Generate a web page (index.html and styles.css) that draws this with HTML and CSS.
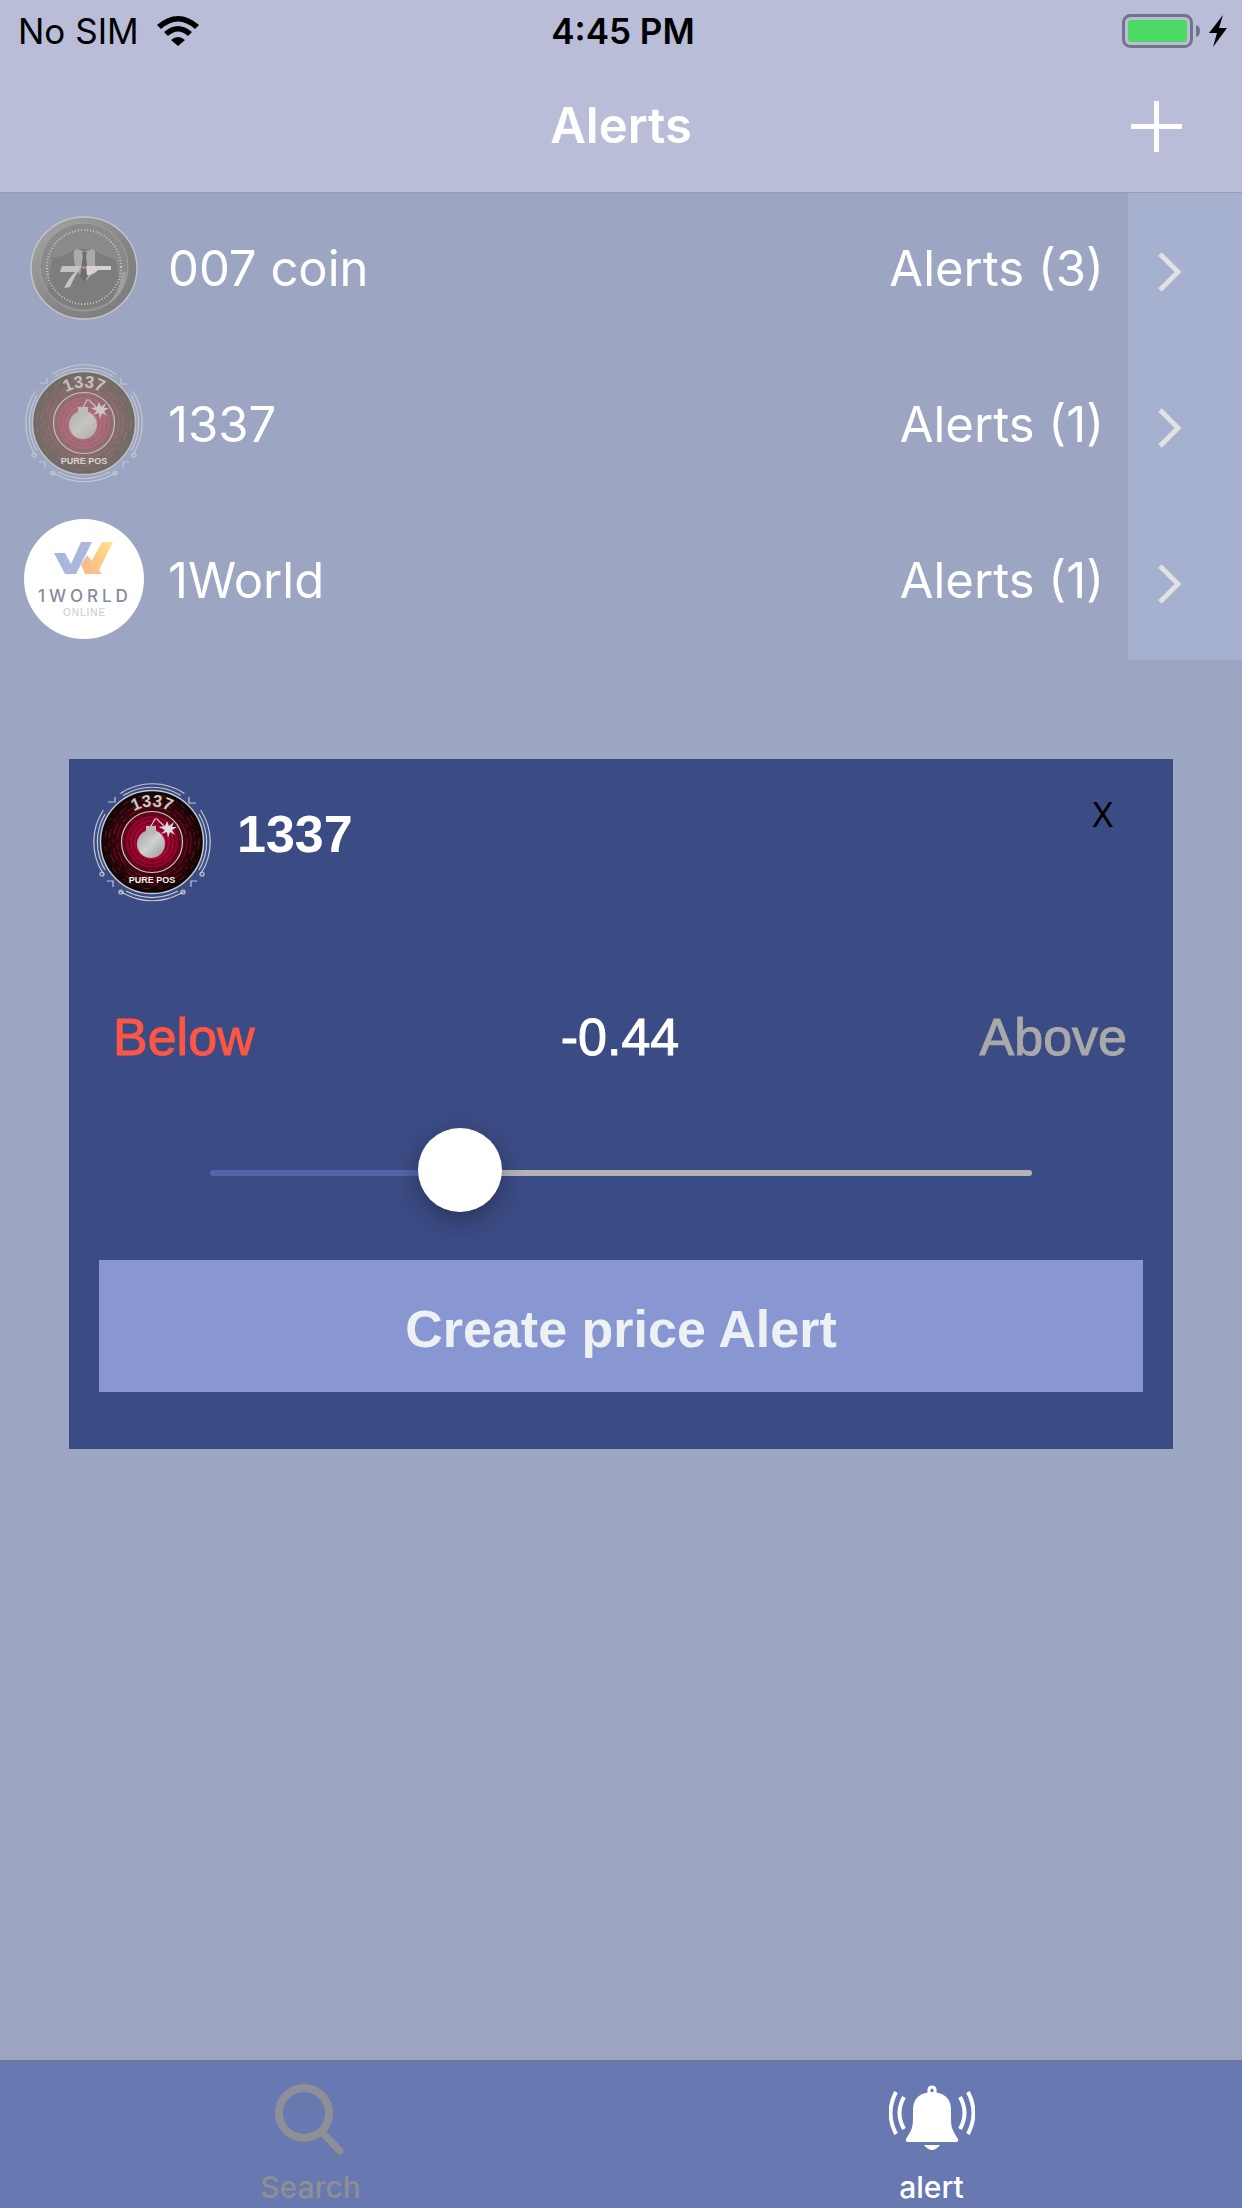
FILE: index.html
```html
<!DOCTYPE html>
<html lang="en">
<head>
<meta charset="utf-8">
<meta name="viewport" content="width=device-width, initial-scale=1">
<title>Alerts</title>
<link rel="stylesheet" href="styles.css">
</head>
<body>
<svg class="sprite" aria-hidden="true">
  <defs>
    <radialGradient id="red-glow">
      <stop offset="0" stop-color="#e00848"/>
      <stop offset=".5" stop-color="#8a0428"/>
      <stop offset=".62" stop-color="#3c060c"/>
      <stop offset="1" stop-color="#0c0605"/>
    </radialGradient>
    <linearGradient id="steel" x1="0" y1="0" x2="1" y2="1">
      <stop offset="0" stop-color="#a2a2a2"/>
      <stop offset=".5" stop-color="#cfcfcf"/>
      <stop offset="1" stop-color="#999"/>
    </linearGradient>
    <linearGradient id="coin-face" x1="0" y1="0" x2="1" y2="1">
      <stop offset="0" stop-color="#a8a8a8"/>
      <stop offset=".55" stop-color="#868686"/>
      <stop offset="1" stop-color="#7c7c7c"/>
    </linearGradient>
    <linearGradient id="gold" x1="0" y1="1" x2="1" y2="0">
      <stop offset="0" stop-color="#f7b98c"/>
      <stop offset=".5" stop-color="#fdcb80"/>
      <stop offset="1" stop-color="#ffe596"/>
    </linearGradient>
    <path id="top-arc" d="M24.500 60a35.500 35.500 0 0 1 71 0"/>
    <symbol id="leet-coin" viewBox="0 0 120 120">
      <g fill="none" stroke="#c4c7d0" stroke-width="1.200">
        <path d="M28.400 11.400A58 58 0 0 1 92.400 11.400M31 13.500A55 55 0 0 1 89 13.500"/>
        <path d="M28 109A58 58 0 0 0 92.400 109M34 109A55 55 0 0 0 86 109"/>
        <path d="M11.400 28A58 58 0 0 0 11.400 92M13 32A55 55 0 0 0 13 88"/>
        <path d="M108.600 28A58 58 0 0 1 108.600 92M107 32A55 55 0 0 1 107 88"/>
        <path d="M16 20l7 0v-5M97 15v6h7M15 99h6v6M99 105v-6h6"/>
        <circle cx="110" cy="92" r="2"/><circle cx="10" cy="92" r="2"/>
        <circle cx="91" cy="110" r="2"/><circle cx="29" cy="110" r="2"/>
      </g>
      <circle cx="60" cy="60" r="51.500" fill="url(#red-glow)" stroke="#c4c7d0" stroke-width="1.500"/>
      <g fill="none" stroke="#c01020" stroke-width="1" opacity=".6">
        <circle cx="60" cy="60" r="47" stroke-dasharray="7 11 2 5 4 9"/>
        <circle cx="60" cy="60" r="43" stroke-dasharray="3 6 9 8"/>
        <circle cx="60" cy="60" r="39" stroke-dasharray="12 6 3 5"/>
        <circle cx="60" cy="60" r="35" stroke-dasharray="16 3 5 4"/>
      </g>
      <g fill="none" stroke="#2a0209" stroke-width="1" opacity=".7">
        <circle cx="60" cy="60" r="27" stroke-dasharray="20 2"/>
        <circle cx="60" cy="60" r="23" stroke-dasharray="9 2"/>
        <circle cx="60" cy="60" r="19"/>
        <circle cx="60" cy="60" r="15"/>
      </g>
      <circle cx="60" cy="60" r="30.500" fill="none" stroke="#c8c8cc" stroke-width="1.200"/>
      <circle cx="59" cy="62" r="14" fill="url(#steel)"/>
      <path d="M54 44h10v8H54z" fill="#b8b8b8"/>
      <path d="M59 44l4-7 2 0 7 7" fill="none" stroke="#d4d4d4" stroke-width="1.200"/>
      <path d="M75 39l2 5 5-4-2 5 5 0-5 3 3 5-5-3-2 6-1-6-6 2 4-4-6-3 6-1z" fill="#ddd"/>
      <text class="coin-year"><textPath href="#top-arc" startOffset="50%" text-anchor="middle">1337</textPath></text>
      <text class="coin-motto" x="60" y="101" text-anchor="middle">PURE POS</text>
    </symbol>
  </defs>
</svg>

<div class="screen">
  <header class="top">
    <div class="status">
      <div class="carrier">
        <span>No SIM</span>
        <svg width="42" height="30" viewBox="0 0 42 30" aria-label="Wi-Fi">
          <path d="M0 9Q21-9 42 9L38 13Q21-2 4 13z"/>
          <path d="M7 16Q21 4 35 16L31 20Q21 11 11 20z"/>
          <path d="M14 24Q21 18 28 24L21 30z"/>
        </svg>
      </div>
      <span class="clock">4:45 PM</span>
      <svg class="battery" width="106" height="34" viewBox="0 0 106 34" aria-label="Battery charging">
        <rect x="1.500" y="1.500" width="68" height="31" rx="7" fill="none" stroke="#6f7487" stroke-width="3"/>
        <rect x="6" y="6" width="59" height="22" rx="3" fill="#4cd964"/>
        <path d="M74 11q4 1 4 6t-4 6z" fill="#6f7487"/>
        <path d="M101 1L87 19h8l-4 14 14-19h-8z"/>
      </svg>
    </div>
    <div class="nav">
      <h1>Alerts</h1>
      <button class="add" type="button" aria-label="Add alert">
        <svg width="51" height="51" viewBox="0 0 51 51"><path d="M25.500 0v51M0 25.500h51" stroke="#fff" stroke-width="5"/></svg>
      </button>
    </div>
  </header>

  <main>
    <ul class="coins">
      <li>
        <svg class="logo" viewBox="0 0 120 120" aria-hidden="true">
          <g transform="translate(0 -1)">
            <ellipse cx="60" cy="62" rx="53" ry="51" fill="url(#coin-face)" stroke="#c4c4c6" stroke-width="1.500"/>
            <ellipse cx="60" cy="61" rx="44" ry="44" fill="#8a8a8a" stroke="#a0a0a0"/>
            <path d="M24 84Q26 60 29 52Q43 50 50 43H70Q78 51 91 53Q95 64 96 84Q86 100 60 103Q34 100 24 84z" fill="#7d7d7d"/>
            <ellipse cx="60" cy="61" rx="37" ry="37" fill="none" stroke="#c6c6c6" stroke-width="2" stroke-dasharray="1 2"/>
            <path d="M50 44l4-1 6 3 8-3 3 1v17q-3 8-9 14l-8-9q-5-6-4-22z" fill="#aaa"/>
            <path d="M58 46h5l-1 4 2 20-4 6-4-6 3-20z" fill="#6d6d6d"/>
            <path d="M38 60h20q-7 9-12 21l-6 1q5-10 11-16H36z" fill="#c3c3c3"/>
            <path d="M62 60h25v4H74q-4 5-11 5z" fill="#d4d4d4"/>
            <circle cx="60" cy="61.500" r="1.500" fill="#e58298"/>
            <path d="M102 65q1 22-20 35 13-12 16-33z" fill="#a0a0a0"/>
          </g>
        </svg>
        <span class="name">007 coin</span>
        <span class="count">Alerts (3)</span>
        <button class="open" type="button" aria-label="Open 007 coin alerts"><svg width="24" height="40" viewBox="0 0 24 40"><path d="M2 2l18 18L2 38"/></svg></button>
      </li>
      <li>
        <svg class="logo" viewBox="0 0 120 120" aria-hidden="true">
          <use href="#leet-coin"/>
          <circle cx="60" cy="60" r="52" fill="#bcbcb4" opacity=".56"/>
        </svg>
        <span class="name">1337</span>
        <span class="count">Alerts (1)</span>
        <button class="open" type="button" aria-label="Open 1337 alerts"><svg width="24" height="40" viewBox="0 0 24 40"><path d="M2 2l18 18L2 38"/></svg></button>
      </li>
      <li>
        <svg class="logo" viewBox="0 0 120 120" aria-hidden="true">
          <circle cx="60" cy="60" r="60" fill="#fff"/>
          <path d="M63 36L78 55 73 55H61L57 46z" fill="#f7bd90"/>
          <path d="M78 23h11L73 55H63L61 54z" fill="url(#gold)"/>
          <path d="M30 34h11l6 11 10-22h11L52 55H41z" fill="#abb6dc"/>
          <text class="world-name" x="14" y="83">1WORLD</text>
          <text class="world-sub" x="39" y="97">ONLINE</text>
        </svg>
        <span class="name">1World</span>
        <span class="count">Alerts (1)</span>
        <button class="open" type="button" aria-label="Open 1World alerts"><svg width="24" height="40" viewBox="0 0 24 40"><path d="M2 2l18 18L2 38"/></svg></button>
      </li>
    </ul>
  </main>

  <nav class="tabs">
    <a href="#search">
      <svg width="72" height="74" viewBox="0 0 72 74" aria-hidden="true">
        <circle cx="29" cy="30" r="25" fill="none" stroke="#8e8f97" stroke-width="8"/>
        <path d="M47 49l18 19" stroke="#8e8f97" stroke-width="7" stroke-linecap="round"/>
      </svg>
      <span>Search</span>
    </a>
    <a class="current" href="#alert" aria-current="page">
      <svg width="86" height="74" viewBox="0 0 86 74" aria-hidden="true">
        <path d="M43 9q19 1 19 18v9c0 9 2 12 7 20q1 3-2 3H19q-3 0-2-3c5-8 7-11 7-20v-9Q24 10 43 9z" fill="#fff"/>
        <path d="M40 11V7q0-3 3-3t3 3v4" fill="none" stroke="#fff" stroke-width="3"/>
        <path d="M35 62h16q-8 10-16 0z" fill="#fff"/>
        <path d="M7 9Q-4 30 7 51M15 14q-9 16 0 32M79 9q11 21 0 42M71 14q9 16 0 32" fill="none" stroke="#fff" stroke-width="4"/>
      </svg>
      <span>alert</span>
    </a>
  </nav>
</div>

<div class="overlay">
  <section class="modal" role="dialog" aria-labelledby="modal-title">
    <div class="modal-head">
      <svg class="modal-logo" viewBox="0 0 120 120" aria-hidden="true"><use href="#leet-coin"/></svg>
      <h2 id="modal-title">1337</h2>
      <button class="close" type="button" aria-label="Close">X</button>
    </div>
    <div class="values">
      <span class="below">Below</span>
      <output class="amount" for="threshold">-0.44</output>
      <span class="above">Above</span>
    </div>
    <input class="slider" id="threshold" type="range" min="-1" max="1" step="any" value="-0.436" aria-label="Price change">
    <button class="create" type="button">Create price Alert</button>
  </section>
</div>
</body>
</html>
```

FILE: styles.css
```css
* {
  box-sizing: border-box;
}

body {
  margin: 0;
  background: #9ca5c1;
  font-family: Inter, "Liberation Sans", sans-serif;
  color: #fff;
}

button {
  padding: 0;
  border: 0;
  background: none;
  color: inherit;
  font: inherit;
}

svg {
  display: block;
  flex: none;
}

.sprite {
  position: absolute;
  width: 0;
  height: 0;
}

.screen {
  display: flex;
  flex-direction: column;
  min-height: 100vh;
}

/* Status bar and title; the hairline lies over the list */
.top {
  position: relative;
  margin-bottom: -1px;
  background: #b9bdd8;
  border-bottom: 1px solid #979db4;
}

.status {
  display: grid;
  grid-template-columns: 1fr auto 1fr;
  align-items: center;
  height: 62px;
  padding: 0 14px 0 18px;
  color: #000;
  font-size: 35px;
  line-height: 60px;
}

.carrier {
  display: flex;
  align-items: center;
  gap: 18px;
}

.clock {
  font-weight: 600;
}

.battery {
  justify-self: end;
}

.nav {
  display: grid;
  grid-template-columns: 1fr auto 1fr;
  align-items: center;
  height: 130px;
  padding: 0 60px 2px;
}

h1 {
  grid-column: 2;
  margin: 0;
  font-size: 49px;
  font-weight: 600;
  line-height: 60px;
}

.add {
  justify-self: end;
}

/* Coin list */
main {
  flex: 1;
}

.coins {
  margin: 0;
  padding: 0;
  list-style: none;
}

.coins li {
  display: flex;
  align-items: center;
  height: 156px;
  padding-left: 24px;
}

.logo,
.modal-logo {
  width: 120px;
  height: 120px;
}

.logo {
  margin-bottom: 6px;
}

.name,
.count {
  padding-bottom: 2px;
  font-size: 49px;
  line-height: 60px;
}

.name {
  flex: 1;
  margin-left: 24px;
}

.count {
  margin-right: 24px;
}

.open {
  display: flex;
  align-items: center;
  align-self: stretch;
  width: 114px;
  padding: 4px 0 0 30px;
  background: #a6b0cf;
}

.open path {
  fill: none;
  stroke: #e2e2e4;
  stroke-width: 5;
}

.coin-year {
  fill: #c9c9c9;
  font: bold 17px "Liberation Sans", sans-serif;
}

.coin-motto {
  fill: #f2f2f2;
  font: bold 9px "Liberation Sans", sans-serif;
}

.world-name {
  fill: #858b9c;
  font: 500 17px Inter, sans-serif;
  letter-spacing: 4px;
}

.world-sub {
  fill: #c8cad6;
  font: 10px "Liberation Sans", sans-serif;
  letter-spacing: 1px;
}

/* Tab bar */
.tabs {
  display: flex;
  height: 148px;
  border-top: 1px solid #6f7690;
  background: #6878b1;
}

.tabs a {
  display: flex;
  flex: 1;
  flex-direction: column;
  align-items: center;
  gap: 12px;
  padding-top: 22px;
  color: #8f8f93;
  font-size: 30px;
  font-weight: 500;
  line-height: 36px;
  text-decoration: none;
}

.tabs .current {
  color: #fff;
}

/* Price alert dialog */
.overlay {
  position: fixed;
  inset: 0;
  display: flex;
  align-items: center;
  justify-content: center;
  padding: 0 69px;
}

.modal {
  flex: 1;
  padding: 23px 30px 57px;
  background: #3b4b84;
  font-family: "Liberation Sans", Arial, sans-serif;
}

.modal-head {
  display: flex;
  align-items: flex-start;
  margin: 0 30px 0 -7px;
}

h2 {
  flex: 1;
  margin: 22px 0 0 25px;
  font-size: 52px;
  font-weight: 700;
  line-height: 60px;
}

.close {
  margin-top: 12px;
  color: #000;
  font: 35px/40px "Noto Sans", sans-serif;
}

.values {
  display: grid;
  grid-template-columns: 1fr auto 1fr;
  margin: 105px 16px 0 14px;
  font-size: 52px;
  line-height: 60px;
  -webkit-text-stroke: 1px currentColor;
}

.below {
  color: #ff5643;
}

.above {
  color: #a9a9a9;
  text-align: right;
}

.slider {
  display: block;
  appearance: none;
  width: calc(100% - 222px);
  height: 84px;
  margin: 64px 111px 0;
  background: none;
}

.slider::-webkit-slider-runnable-track {
  height: 6px;
  border-radius: 3px;
  background: linear-gradient(to right, #5165a7 30%, #b4b4b4 30%);
}

.slider::-webkit-slider-thumb {
  appearance: none;
  width: 84px;
  height: 84px;
  margin-top: -42px;
  border-radius: 50%;
  background: #fff;
  box-shadow: 0 8px 24px rgba(0, 0, 0, 0.3);
}

.create {
  display: block;
  width: 100%;
  height: 132px;
  margin-top: 45px;
  padding-top: 6px;
  background: #8897d1;
  color: #edf1f3;
  font-size: 52px;
  font-weight: 700;
  line-height: 60px;
}
```
